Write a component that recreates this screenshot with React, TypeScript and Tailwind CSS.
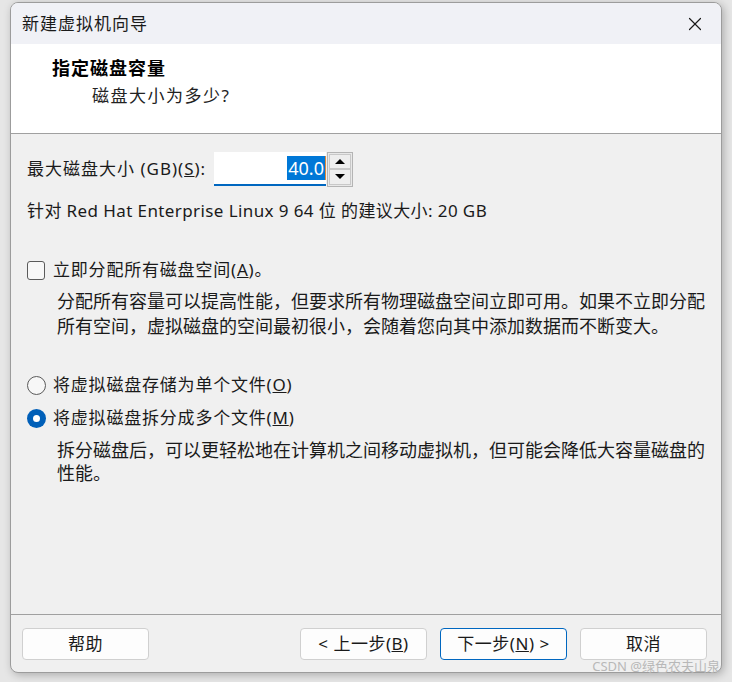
import { X } from "lucide-react";

const cjk = "font-['Segoe_UI','Noto_Sans','Noto_Sans_CJK_SC',sans-serif]";

function Radio({ checked }: { checked?: boolean }) {
  return checked ? (
    <span className="flex h-[19px] w-[19px] items-center justify-center rounded-full bg-[#005fb8]">
      <span className="h-[7px] w-[7px] rounded-full bg-white" />
    </span>
  ) : (
    <span className="h-[19px] w-[19px] rounded-full border border-[#5a5a5a] bg-[#f7f7f7]" />
  );
}

function Btn({ children, primary }: { children: React.ReactNode; primary?: boolean }) {
  return (
    <button
      className={
        "flex h-[32px] w-[127px] items-center justify-center rounded-[4px] bg-[#fdfdfd] text-[17px] tracking-[0.5px] text-[#1a1a1a] " +
        (primary ? "border border-[#0067c0]" : "border border-[#d0d0d0]")
      }
    >
      {children}
    </button>
  );
}

export default function App() {
  return (
    <div className={"relative h-[682px] w-[732px] overflow-hidden bg-[#e6e6e6] pl-[10px] pt-[2px] " + cjk}>
      <div className="flex h-[671px] w-[712px] flex-col overflow-hidden rounded-[8px] border border-[#9c9c9c] bg-[#f0f0f0] shadow-[2px_2px_8px_rgba(0,0,0,0.25)]">
        {/* title bar */}
        <div className="flex h-[41px] items-center justify-between bg-[#f0f1f6] pl-[11px] pr-[15px]">
          <span className="text-[17px] tracking-[1px] text-[#1a1a1a]">新建虚拟机向导</span>
          <X size={22} strokeWidth={1.3} className="text-[#1a1a1a]" />
        </div>

        {/* header */}
        <div className="h-[90px] border-b border-[#a0a0a0] bg-white pt-[12px] leading-[24px] text-black">
          <div className="pl-[41px] text-[18px] font-bold tracking-[1px]">指定磁盘容量</div>
          <div className="pl-[81px] pt-[4px] text-[17px] tracking-[1.5px] text-[#222]">磁盘大小为多少?</div>
        </div>

        {/* body */}
        <div className="flex-1 pl-[16px] text-[#1a1a1a]">
          <div className="mt-[18px] flex h-[34px] items-center">
            <span className="w-[187px] text-[17px] tracking-[1px]">
              最大磁盘大小 (GB)(<u>S</u>):
            </span>
            <div className="flex h-[34px] w-[112px] items-center justify-end border-b-2 border-[#0067c0] bg-white">
              <span className="bg-[#0078d7] px-[1px] text-[18px] leading-[24px] text-white">40.0</span>
              <span className="h-[24px] w-[1px] bg-[#e08a3a]" />
            </div>
            <div className="ml-[1px] flex h-[35px] w-[26px] flex-col border border-[#b4b4b4] bg-[#e8e8e8] p-[1px]">
              <div className="flex flex-1 items-center justify-center border border-[#c8c8c8] bg-[#eeeeee]">
                <span className="h-0 w-0 border-x-[5px] border-b-[5px] border-x-transparent border-b-black" />
              </div>
              <div className="flex flex-1 items-center justify-center border border-[#c8c8c8] bg-[#eeeeee]">
                <span className="h-0 w-0 border-x-[5px] border-t-[5px] border-x-transparent border-t-black" />
              </div>
            </div>
          </div>

          <div className="mt-[13px] text-[17px] leading-[24px] tracking-[0.4px]">
            针对 Red Hat Enterprise Linux 9 64 位 的建议大小: 20 GB
          </div>

          <div className="mt-[35px] flex h-[24px] items-center">
            <span className="h-[19px] w-[18px] rounded-[3px] border border-[#5a5a5a] bg-[#f7f7f7]" />
            <span className="ml-[8px] text-[17px] tracking-[0.8px]">
              立即分配所有磁盘空间(<u>A</u>)。
            </span>
          </div>
          <p className="mt-[7px] whitespace-nowrap pl-[30px] text-[18px] leading-[25px]">
            分配所有容量可以提高性能，但要求所有物理磁盘空间立即可用。如果不立即分配
            <br />
            所有空间，虚拟磁盘的空间最初很小，会随着您向其中添加数据而不断变大。
          </p>

          <div className="mt-[34px] flex h-[24px] items-center">
            <Radio />
            <span className="ml-[7px] text-[17px] tracking-[0.8px]">
              将虚拟磁盘存储为单个文件(<u>O</u>)
            </span>
          </div>
          <div className="mt-[9px] flex h-[24px] items-center">
            <Radio checked />
            <span className="ml-[7px] text-[17px] tracking-[0.8px]">
              将虚拟磁盘拆分成多个文件(<u>M</u>)
            </span>
          </div>
          <p className="mt-[9px] whitespace-nowrap pl-[30px] text-[18px] leading-[23px]">
            拆分磁盘后，可以更轻松地在计算机之间移动虚拟机，但可能会降低大容量磁盘的
            <br />
            性能。
          </p>
        </div>

        {/* footer */}
        <div className="flex h-[58px] items-start border-t border-[#a0a0a0] pl-[11px] pt-[13px]">
          <Btn>帮助</Btn>
          <div className="ml-[151px] flex gap-[13px]">
            <Btn>&lt; 上一步(<u>B</u>)</Btn>
            <Btn primary>
              下一步(<u>N</u>) &gt;
            </Btn>
            <Btn>取消</Btn>
          </div>
        </div>
      </div>
      <span className="absolute bottom-[6px] right-[12px] text-[13px] text-[#b8b8b8]">CSDN @绿色农夫山泉</span>
    </div>
  );
}
